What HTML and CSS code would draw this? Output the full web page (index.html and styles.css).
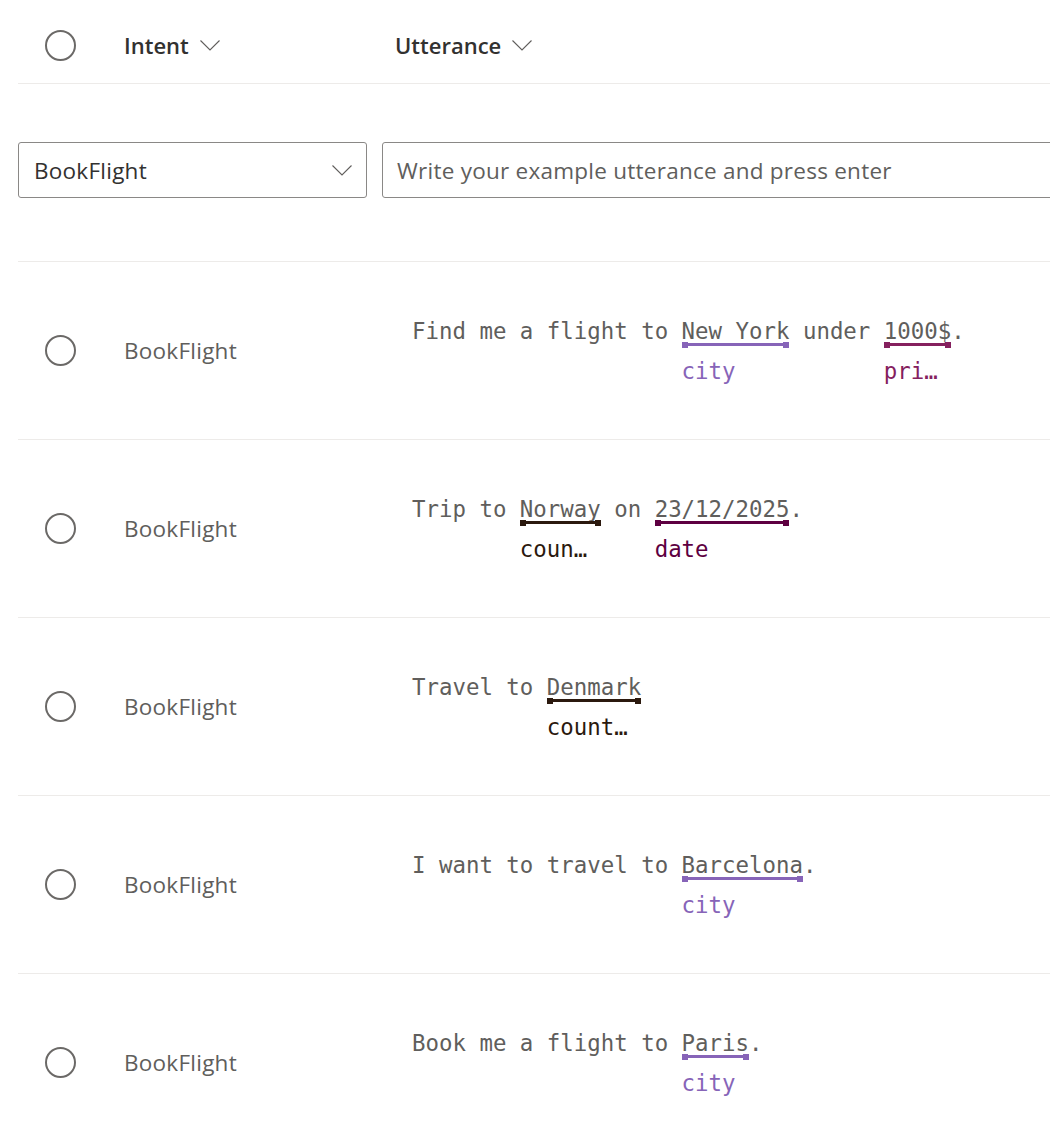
FILE: index.html
```html
<!DOCTYPE html>
<html lang="en">
<head>
<meta charset="utf-8">
<title>Utterances</title>
<link rel="stylesheet" href="styles.css">
</head>
<body>
<div class="page">
  <div class="header">
    <div class="check-cell"><span class="circle"></span></div>
    <div class="col-head">Intent <svg class="chev-sm" viewBox="0 0 20 11" width="20" height="11"><path d="M0.5 0.5 L10 10 L19.5 0.5" fill="none" stroke="#605e5c" stroke-width="1.1"/></svg></div>
    <div class="col-head">Utterance <svg class="chev-sm" viewBox="0 0 20 11" width="20" height="11"><path d="M0.5 0.5 L10 10 L19.5 0.5" fill="none" stroke="#605e5c" stroke-width="1.1"/></svg></div>
  </div>

  <div class="composer">
    <div class="dropdown">
      <span class="dd-value">BookFlight</span>
      <svg class="dd-chev" viewBox="0 0 20 11" width="20" height="11"><path d="M0.5 0.5 L10 10 L19.5 0.5" fill="none" stroke="#605e5c" stroke-width="1.1"/></svg>
    </div>
    <div class="textbox">Write your example utterance and press enter</div>
  </div>

  <div class="row">
    <div class="check-cell"><span class="circle"></span></div>
    <div class="intent">BookFlight</div>
    <div class="utter">Find me a flight to <span class="entity city"><span class="ent-text">New York</span><span class="bar"><span class="line"></span></span><span class="label">city</span></span> under <span class="entity price"><span class="ent-text">1000$</span><span class="bar"><span class="line"></span></span><span class="label">price</span></span>.</div>
  </div>

  <div class="row">
    <div class="check-cell"><span class="circle"></span></div>
    <div class="intent">BookFlight</div>
    <div class="utter">Trip to <span class="entity country"><span class="ent-text">Norway</span><span class="bar"><span class="line"></span></span><span class="label">country</span></span> on <span class="entity date"><span class="ent-text">23/12/2025</span><span class="bar"><span class="line"></span></span><span class="label">date</span></span>.</div>
  </div>

  <div class="row">
    <div class="check-cell"><span class="circle"></span></div>
    <div class="intent">BookFlight</div>
    <div class="utter">Travel to <span class="entity country"><span class="ent-text">Denmark</span><span class="bar"><span class="line"></span></span><span class="label">country</span></span></div>
  </div>

  <div class="row">
    <div class="check-cell"><span class="circle"></span></div>
    <div class="intent">BookFlight</div>
    <div class="utter">I want to travel to <span class="entity city"><span class="ent-text">Barcelona</span><span class="bar"><span class="line"></span></span><span class="label">city</span></span>.</div>
  </div>

  <div class="row">
    <div class="check-cell"><span class="circle"></span></div>
    <div class="intent">BookFlight</div>
    <div class="utter">Book me a flight to <span class="entity city"><span class="ent-text">Paris</span><span class="bar"><span class="line"></span></span><span class="label">city</span></span>.</div>
  </div>
</div>
</body>
</html>
```

FILE: styles.css
```css
html, body {
  margin: 0;
  padding: 0;
  background: #ffffff;
}
body {
  overflow: hidden;
  font-family: "Open Sans", "Noto Sans", "Liberation Sans", sans-serif;
}
.page {
  width: 1100px;
  padding-left: 18px;
}

/* header */
.header {
  display: grid;
  grid-template-columns: 106px 271px 1fr;
  align-items: center;
  height: 84px;
  box-sizing: border-box;
  padding-top: 7px;
  border-bottom: 1px solid #edebe9;
}
.check-cell {
  padding-left: 27px;
  display: flex;
  align-items: center;
}
.circle {
  display: block;
  width: 31px;
  height: 31px;
  box-sizing: border-box;
  border: 2px solid #6b6967;
  border-radius: 50%;
}
.col-head {
  display: flex;
  align-items: center;
  gap: 11px;
  font-size: 22px;
  font-weight: 600;
  color: #323130;
}
.chev-sm {
  display: block;
  margin-top: 1px;
}

/* composer */
.composer {
  display: flex;
  gap: 15px;
  padding: 58px 0 63px;
}
.dropdown {
  width: 349px;
  height: 56px;
  box-sizing: border-box;
  border: 1px solid #8a8886;
  border-radius: 3px;
  display: flex;
  align-items: center;
  justify-content: space-between;
  padding: 0 14px 0 15px;
}
.dd-value {
  font-size: 22.5px;
  color: #323130;
  letter-spacing: 0.25px;
}
.dd-chev {
  display: block;
}
.textbox {
  flex: 1;
  height: 56px;
  box-sizing: border-box;
  border: 1px solid #8a8886;
  border-radius: 3px;
  display: flex;
  align-items: center;
  padding-left: 14px;
  font-size: 22.5px;
  color: #605e5c;
  letter-spacing: 0.25px;
}

/* rows */
.row {
  display: grid;
  grid-template-columns: 106px 271px 1fr;
  align-items: center;
  height: 178px;
  box-sizing: border-box;
  border-top: 1px solid #edebe9;
}
.intent {
  font-size: 22.5px;
  color: #605e5c;
  letter-spacing: 0.25px;
}
.utter {
  padding-left: 17px;
  font-family: "DejaVu Sans Mono", "Liberation Mono", monospace;
  font-size: 22.4px;
  line-height: 26px;
  color: #605e5c;
  white-space: pre;
}
.entity {
  display: inline-flex;
  flex-direction: column;
  vertical-align: baseline;
}
.ent-text {
  line-height: 26px;
}
.bar {
  display: flex;
  align-items: center;
  height: 6px;
  margin-top: -2px;
}
.bar::before,
.bar::after {
  content: "";
  width: 6px;
  height: 6px;
  background: currentColor;
  flex: none;
}
.line {
  flex: 1;
  height: 3px;
  background: currentColor;
}
.label {
  contain: inline-size;
  margin-top: 10px;
  padding-right: 2px;
  line-height: 26px;
  overflow: hidden;
  text-overflow: ellipsis;
  white-space: nowrap;
}
.entity.city .bar, .entity.city .label { color: #8764b8; }
.entity.price .bar, .entity.price .label { color: #85205e; }
.entity.country .bar, .entity.country .label { color: #2b190e; }
.entity.date .bar, .entity.date .label { color: #5e0041; }
```
